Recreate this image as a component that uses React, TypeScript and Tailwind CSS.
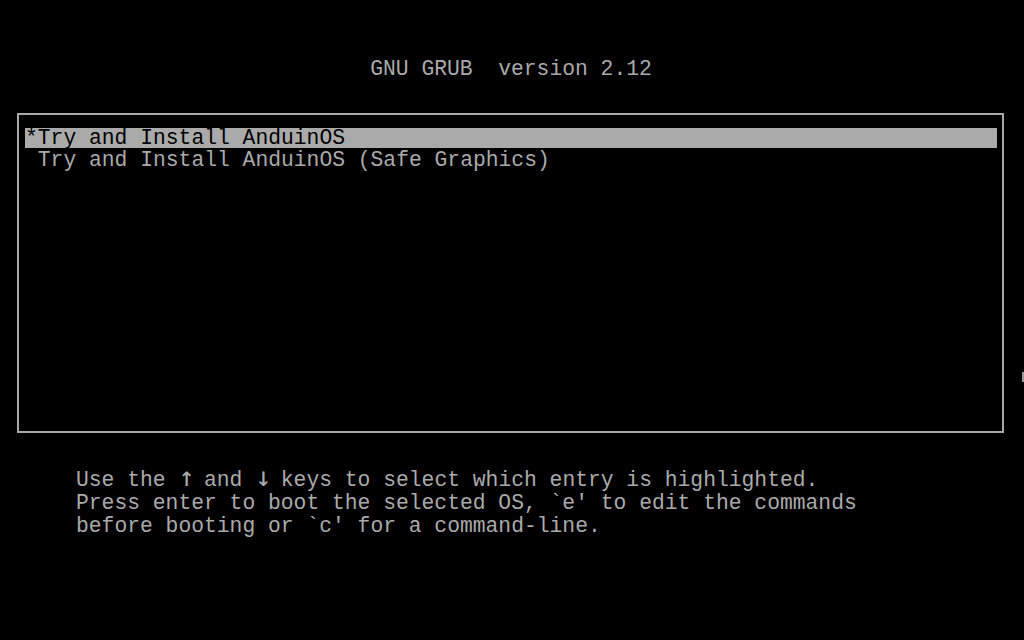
const entries = [
  { label: "Try and Install AnduinOS", selected: true },
  { label: "Try and Install AnduinOS (Safe Graphics)", selected: false },
];

function Arrow({ glyph }: { glyph: string }) {
  return (
    <span className="font-['DejaVu_Sans_Mono',monospace] text-[27px] leading-[0px] tracking-[-3.46px] text-[#aaaaaa]">
      {glyph}
    </span>
  );
}

export default function App() {
  return (
    <div className="relative h-[640px] w-full overflow-hidden bg-black font-['Liberation_Mono',monospace] text-[21.33px] text-[#aaaaaa]">
      {/* Header */}
      <div className="pt-[58px] pr-[2px] text-center leading-[23px] whitespace-pre">
        GNU GRUB  version 2.12
      </div>

      {/* Menu box */}
      <div className="ml-[17px] mt-[32px] h-[320px] w-[987px] border-2 border-[#a8a8a8] px-[5px] pt-[13px] pl-[6px]">
        <div className="flex flex-col gap-[2px]">
          {entries.map((entry) => (
            <div
              key={entry.label}
              className={
                entry.selected
                  ? "h-[20px] bg-[#aaaaaa] leading-[20px] whitespace-pre text-black"
                  : "h-[20px] leading-[20px] whitespace-pre"
              }
            >
              {(entry.selected ? "*" : " ") + entry.label}
            </div>
          ))}
        </div>
      </div>

      {/* Help text */}
      <div className="ml-[76px] mt-[36px] leading-[23px] whitespace-pre">
        <div className="h-[23px]">
          Use the <Arrow glyph="↑" /> and <Arrow glyph="↓" /> keys to select which entry is highlighted.
        </div>
        <div className="h-[23px]">Press enter to boot the selected OS, `e' to edit the commands</div>
        <div className="h-[23px]">before booting or `c' for a command-line.</div>
      </div>

      {/* stray cursor mark at the right edge */}
      <div className="absolute left-[1022px] top-[372px] h-[10px] w-[2px] bg-[#999999]" />
    </div>
  );
}
